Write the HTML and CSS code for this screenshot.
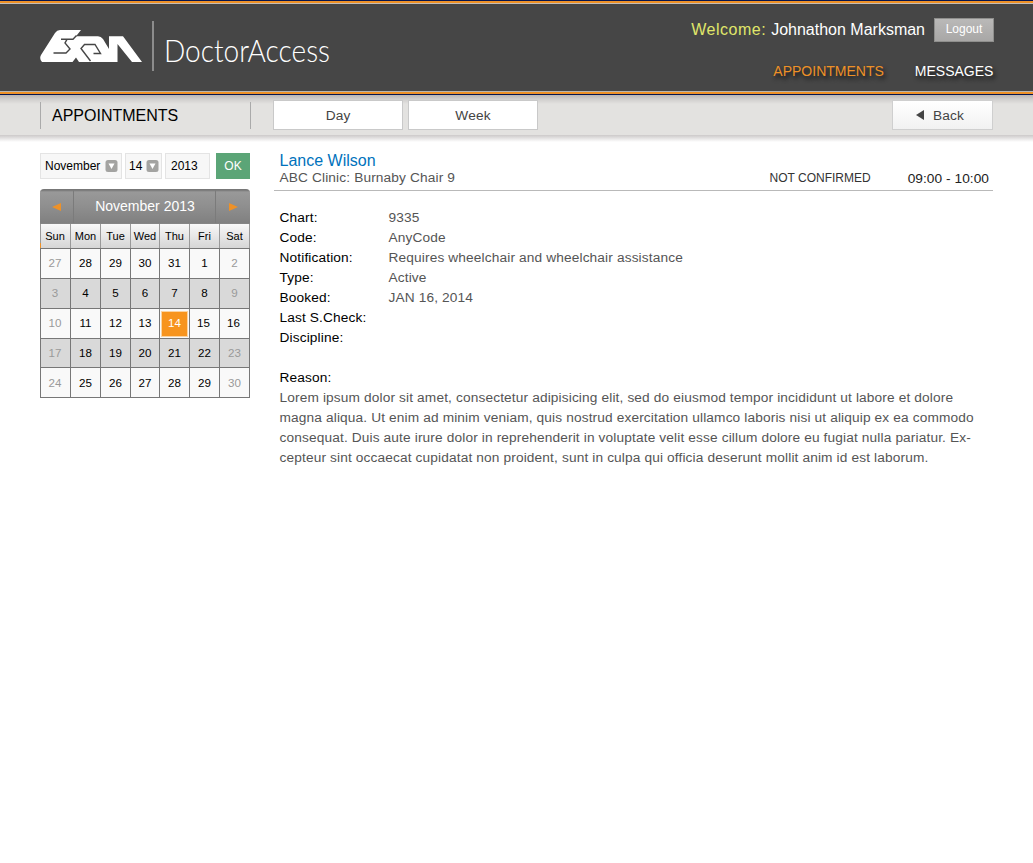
FILE: index.html
```
<!DOCTYPE html>
<html lang="en">
<head>
<meta charset="utf-8">
<title>Exan DoctorAccess</title>
<link rel="stylesheet" href="styles.css">
</head>
<body>
<header class="header">
  <div class="brand">
    <svg class="logo" viewBox="0 0 102 34" role="img" aria-label="Exan">
      <path fill="#fff" d="M2 33Q-1 30 1 26L15 4Q17 1 20 1H41L36 7.3H58Q61 7.3 63 10L69 20V7.3H83L102 33H92L77.5 15V33H39L36 28.5L32.5 33Z"/>
      <g fill="none" stroke="#464646" stroke-width="1.4">
        <path d="M36.5 6.5L33 10.3H21M27 10.3L25 14L30 20L26 24H13.5"/>
        <path d="M50.5 32L41 19.5L44.5 15.5H55L60.5 24.5H53.5"/>
      </g>
    </svg>
    <span class="brand-rule"></span>
    <svg class="wordmark" viewBox="0 0 176 50"><text x="0" y="34" textLength="166" lengthAdjust="spacingAndGlyphs">DoctorAccess</text></svg>
  </div>
  <div class="account">
    <div class="welcome"><span class="hello">Welcome:</span><span class="user">Johnathon Marksman</span><button class="logout">Logout</button></div>
    <nav class="nav"><a class="active">APPOINTMENTS</a><a class="messages">MESSAGES</a></nav>
  </div>
</header>
<div class="toolbar">
  <h1 class="title">APPOINTMENTS</h1>
  <button class="tab">Day</button>
  <button class="tab">Week</button>
  <button class="back"><svg width="8" height="10" viewBox="0 0 8 10"><path d="M0 5L8 0V10Z" fill="#444"/></svg><span>Back</span></button>
</div>
<main class="main">
  <aside class="side">
    <form class="picker">
      <span class="field month">November<svg class="drop" viewBox="0 0 12 12"><rect width="12" height="12" rx="2.5" fill="#a3a3a1"/><path d="M3 3.5H9L6 9Z" fill="#fff"/></svg></span>
      <span class="field date">14<svg class="drop" viewBox="0 0 12 12"><rect width="12" height="12" rx="2.5" fill="#a3a3a1"/><path d="M3 3.5H9L6 9Z" fill="#fff"/></svg></span>
      <span class="field year">2013</span>
      <button type="button" class="ok">OK</button>
    </form>
    <div class="calendar">
      <div class="cal-head">
        <span class="arrow prev"><svg width="9" height="8" viewBox="0 0 9 8"><path d="M0 4L9 0V8Z" fill="#ee9127"/></svg></span>
        <span class="cal-title">November 2013</span>
        <span class="arrow next"><svg width="9" height="8" viewBox="0 0 9 8"><path d="M9 4L0 0V8Z" fill="#ee9127"/></svg></span>
      </div>
      <div class="week names"><span>Sun</span><span>Mon</span><span>Tue</span><span>Wed</span><span>Thu</span><span>Fri</span><span>Sat</span></div>
      <div class="week"><span class="out">27</span><span>28</span><span>29</span><span>30</span><span>31</span><span>1</span><span class="out">2</span></div>
      <div class="week shade"><span class="out">3</span><span>4</span><span>5</span><span>6</span><span>7</span><span>8</span><span class="out">9</span></div>
      <div class="week"><span class="out">10</span><span>11</span><span>12</span><span>13</span><span class="selected"><b class="today">14</b></span><span class="near">15</span><span class="near">16</span></div>
      <div class="week shade short"><span class="out">17</span><span>18</span><span>19</span><span>20</span><span>21</span><span>22</span><span class="out">23</span></div>
      <div class="week last"><span class="out">24</span><span>25</span><span>26</span><span>27</span><span>28</span><span>29</span><span class="out">30</span></div>
    </div>
  </aside>
  <section class="detail">
    <div class="detail-head">
      <div class="who"><h2 class="name">Lance Wilson</h2><p class="clinic">ABC Clinic: Burnaby Chair 9</p></div>
      <span class="status">NOT CONFIRMED</span>
      <span class="time">09:00 - 10:00</span>
    </div>
    <dl class="facts">
      <dt>Chart:</dt><dd>9335</dd>
      <dt>Code:</dt><dd>AnyCode</dd>
      <dt>Notification:</dt><dd>Requires wheelchair and wheelchair assistance</dd>
      <dt>Type:</dt><dd>Active</dd>
      <dt>Booked:</dt><dd>JAN 16, 2014</dd>
      <dt>Last S.Check:</dt><dd></dd>
      <dt>Discipline:</dt><dd></dd>
    </dl>
    <div class="reason">
      <h3 class="reason-title">Reason:</h3>
      <p class="reason-text">Lorem ipsum dolor sit amet, consectetur adipisicing elit, sed do eiusmod tempor incididunt ut labore et dolore<br>magna aliqua. Ut enim ad minim veniam, quis nostrud exercitation ullamco laboris nisi ut aliquip ex ea commodo<br>consequat. Duis aute irure dolor in reprehenderit in voluptate velit esse cillum dolore eu fugiat nulla pariatur. Ex-<br>cepteur sint occaecat cupidatat non proident, sunt in culpa qui officia deserunt mollit anim id est laborum.</p>
    </div>
  </section>
</main>
</body>
</html>
```
FILE: styles.css
```
* { box-sizing: border-box; margin: 0; padding: 0; }
body { font-family: "Liberation Sans", Arial, sans-serif; font-size: 13.7px; color: #000; background: #fff; }
button { font: inherit; border: 0; }
svg { display: block; }

.header {
  height: 95px;
  padding: 0 39px 0 40px;
  display: flex;
  justify-content: space-between;
  background: linear-gradient(#071650 0 1px, #ee9127 1px 3px, #c5bdb5 3px 4px, #464646 4px 91px, #b5b5b5 91px 92px, #ee9127 92px 94px, #071650 94px);
}
.brand { display: flex; padding-top: 21px; }
.logo { width: 102px; height: 34px; margin-top: 8px; }
.brand-rule { width: 2px; height: 50px; margin-left: 10px; background: #8c8c8c; }
.wordmark { width: 176px; height: 50px; margin: 7px 0 0 10px; overflow: visible; }
.wordmark text { font-family: Lato, sans-serif; font-weight: 300; font-size: 31px; fill: #fff; }

.account { display: flex; flex-direction: column; align-items: flex-end; }
.welcome { display: flex; align-items: center; height: 24px; margin-top: 18px; font-size: 16px; color: #fff; }
.hello { color: #e0e66a; margin-right: 5px; letter-spacing: .5px; }
.user { margin-right: 9px; }
.logout { width: 60px; height: 24px; padding-bottom: 2px; border: 1px solid #8f8f8d; background: linear-gradient(#bab9b8, #a8a7a6); color: #fff; font-size: 12px; }
.nav { display: flex; gap: 31px; margin: 21px 0 0 0; padding-right: .6px; font-size: 14px; line-height: 16px; color: #fff; text-shadow: 2px 3px 4px #111; }
.active { color: #ee9127; }

.toolbar {
  height: 48px;
  padding: 5px 40px 0 40px;
  display: flex;
  background: linear-gradient(#b9b6b6, #cfcdcc 4px, #e3e2e0 9px, #e3e2e0 40px, #ccc9c9 40px, #fff 47px);
}
.title { width: 211px; height: 27px; margin: 2px 22px 0 0; padding-left: 11px; border: solid #aaa; border-width: 0 1px; font-size: 16px; font-weight: 400; line-height: 27px; }
.tab { width: 130px; height: 30px; margin-right: 5px; border: 1px solid #c9c9c9; background: #fff; color: #444; letter-spacing: .13px; }
.back { width: 101px; height: 30px; margin-left: auto; padding-right: 5px; border: 1px solid #cfcfcf; background: linear-gradient(#fff, #f1f1f1); display: flex; align-items: center; justify-content: center; gap: 9px; color: #444; letter-spacing: .13px; }

.main { display: flex; padding: 10px 40px 0; }
.side { width: 210px; margin-right: 24px; }
.picker { display: flex; font-size: 12px; }
.field { height: 26px; display: flex; align-items: center; border: 1px solid #e4e4e4; background: #f7f7f7; padding-left: 4px; }
.month { width: 82px; margin-right: 3px; }
.date { width: 37px; margin-right: 3px; padding-left: 3px; }
.year { width: 45px; margin-right: 6px; padding-left: 5px; }
.drop { width: 13px; height: 12px; margin: 0 3px 0 auto; }
.date .drop { margin-right: 2px; }
.ok { width: 34px; height: 26px; background: #5ba577; color: #fff; }
.calendar { width: 210px; margin-top: 10px; }
.cal-head { height: 35px; display: flex; border-radius: 4px 4px 0 0; background: linear-gradient(#757575, #999 2px, #8f8f8f 16px, #808080 33px); border-top: 1px solid #777; border-bottom: 1px solid #858585; }
.arrow { width: 34px; display: flex; align-items: center; justify-content: center; padding-top: 1px; }
.prev { border-right: 1px solid #7b7b7b; }
.next { width: 35px; border-left: 1px solid #7b7b7b; padding-left: 1px; }
.cal-title { flex: 1; line-height: 33px; padding-left: 1px; text-align: center; color: #fff; font-size: 14px; }
.week { display: grid; grid-template-columns: 31px 30px 30px 29px 30px 30px 30px; height: 30px; border-bottom: 1px solid #777; background: #f9f9f9; font-size: 11.6px; }
.week > span { display: flex; align-items: center; justify-content: center; border-right: 1px solid #777; padding: 0 0 2px 0; }
.week > span:first-child { border-left: 1px solid #777; padding-right: 1px; }
.week > .near { padding-right: 2px; }
.week.names { height: 25px; font-size: 11px; background: linear-gradient(#f8f8f8, #d6d6d6); }
.week.names > span { border-color: #999; padding: 0; }
.week.names > span:first-child { border-left-width: 0; background: linear-gradient(#999 0 19px, #ee9127 19px) left / 1px 100% no-repeat; }
.shade { background: #d9d9d9; }
.week.short { height: 29px; }
.short > span, .last > span { padding-bottom: 1px; }
.week > .selected { padding: 1px 0 0; }
.out { color: #999; }
.today { width: 25px; height: 24px; background: #f7941e; color: #fff; font-weight: 400; line-height: 22px; text-align: center; outline: 1px solid #fbd3a0; }

.detail { width: 719px; }
.detail-head { height: 38px; display: flex; border-bottom: 1px solid #b9b9b9; padding: 0 4px 0 5.5px; }
.who { flex: 1; }
.name { font-size: 16px; font-weight: 400; line-height: 16px; color: #0072bc; }
.clinic { line-height: 18px; color: #555; }
.clinic, .facts, .reason { letter-spacing: .135px; }
.status { font-size: 12px; color: #333; line-height: 15px; margin: 18px 37px 0 0; }
.time { color: #222; line-height: 16px; margin-top: 18px; letter-spacing: .05px; }
.facts { display: grid; grid-template-columns: 109px 1fr; grid-auto-rows: 20px; line-height: 20px; margin: 17px 0 0 5.5px; }
.facts dd { color: #555; }
.reason { margin: 20px 0 0 5.5px; line-height: 20px; white-space: nowrap; }
.reason-title { font-size: inherit; font-weight: 400; }
.reason-text { color: #555; }
```
